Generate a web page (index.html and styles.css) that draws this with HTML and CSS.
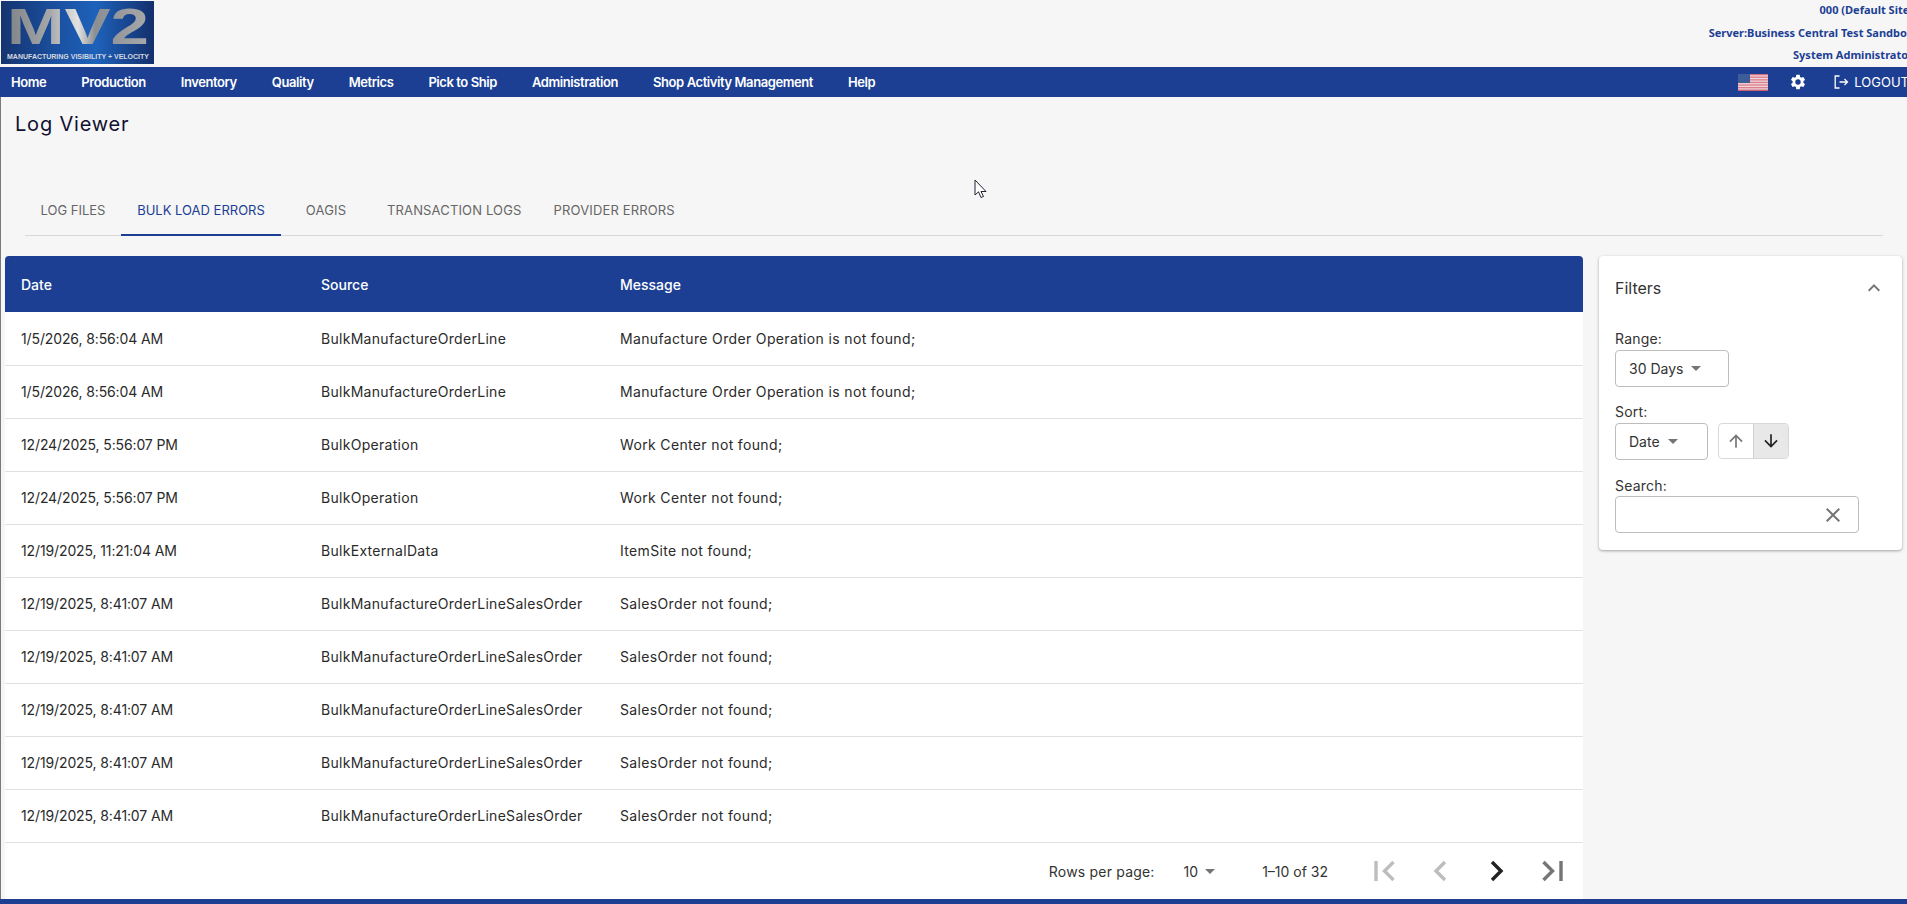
FILE: index.html
```html
<!DOCTYPE html>
<html lang="en">
<head>
<meta charset="utf-8">
<title>Log Viewer</title>
<link rel="stylesheet" href="styles.css">
</head>
<body>
<div class="app">
  <header class="top">
    <svg class="logo" width="153" height="63" viewBox="0 0 153 63" role="img" aria-label="MV2 logo">
      <defs>
        <linearGradient id="bg" x1="0" x2="1" y1="0" y2="0">
          <stop offset="0" stop-color="#15346f"/><stop offset="0.35" stop-color="#1a4f9f"/>
          <stop offset="0.62" stop-color="#1e62bb"/><stop offset="1" stop-color="#142f6c"/>
        </linearGradient>
        <linearGradient id="steel" x1="0" x2="1" y1="0" y2="0">
          <stop offset="0" stop-color="#7f8488"/><stop offset="0.3" stop-color="#a5a7a9"/>
          <stop offset="0.5" stop-color="#e2e2e2"/><stop offset="0.62" stop-color="#8b8e92"/>
          <stop offset="1" stop-color="#a6a8aa"/>
        </linearGradient>
      </defs>
      <rect width="153" height="63" fill="url(#bg)"/>
      <text class="logo-mark" x="6" y="43" textLength="142" lengthAdjust="spacingAndGlyphs" fill="url(#steel)">MV2</text>
      <text class="logo-tag" x="6" y="58" textLength="142" lengthAdjust="spacingAndGlyphs">MANUFACTURING VISIBILITY + VELOCITY</text>
    </svg>
    <div class="site-info">
      <div>000 (Default Site)</div>
      <div>Server:Business Central Test Sandbox</div>
      <div>System Administrator</div>
    </div>
  </header>

  <nav class="nav">
    <ul class="nav-links">
      <li>Home</li><li>Production</li><li>Inventory</li><li>Quality</li><li>Metrics</li>
      <li>Pick to Ship</li><li>Administration</li><li>Shop Activity Management</li><li>Help</li>
    </ul>
    <div class="nav-tools">
      <svg class="flag" width="30" height="17" viewBox="0 0 30 17" aria-label="US flag">
        <rect width="30" height="17" fill="#f1d3d8"/>
        <rect y="0" width="30" height="1.3" fill="#d9707f"/><rect y="2.6" width="30" height="1.3" fill="#d9808e"/>
        <rect y="5.2" width="30" height="1.3" fill="#d9808e"/><rect y="7.8" width="30" height="1.3" fill="#d9808e"/>
        <rect y="10.4" width="30" height="1.3" fill="#d9808e"/><rect y="13" width="30" height="1.3" fill="#d9808e"/>
        <rect y="15.6" width="30" height="1.4" fill="#c85f72"/>
        <rect width="12" height="9" fill="#3e5c98"/>
      </svg>
      <svg class="gear" width="18" height="18" viewBox="0 0 24 24" aria-label="Settings"><path fill="#fff" d="M19.14 12.94c.04-.3.06-.61.06-.94s-.02-.64-.07-.94l2.03-1.58a.49.49 0 0 0 .12-.61l-1.92-3.32a.49.49 0 0 0-.59-.22l-2.39.96a7 7 0 0 0-1.62-.94l-.36-2.54a.48.48 0 0 0-.48-.41h-3.84a.48.48 0 0 0-.47.41l-.36 2.54c-.59.24-1.13.57-1.62.94l-2.39-.96a.49.49 0 0 0-.59.22L2.74 8.87a.48.48 0 0 0 .12.61l2.03 1.58c-.05.3-.09.63-.09.94s.02.64.07.94l-2.03 1.58a.49.49 0 0 0-.12.61l1.92 3.32c.12.22.37.29.59.22l2.39-.96c.5.38 1.03.7 1.62.94l.36 2.54c.05.24.24.41.48.41h3.84c.24 0 .44-.17.47-.41l.36-2.54a7 7 0 0 0 1.62-.94l2.39.96c.22.08.47 0 .59-.22l1.92-3.32a.47.47 0 0 0-.12-.61zM12 15.6A3.6 3.6 0 1 1 12 8.4a3.6 3.6 0 0 1 0 7.2z"/></svg>
      <span class="logout">
        <svg width="16" height="16" viewBox="0 0 16 16" fill="none" stroke="#fff" stroke-width="1.3" aria-hidden="true"><path d="M6.500 2H2.200v12h4.300M6.500 8h8M11.500 5l3 3-3 3"/></svg>
        LOGOUT
      </span>
    </div>
  </nav>

  <main class="main">
    <h1 class="title">Log Viewer</h1>
    <div class="tabs">
      <div class="tab">LOG FILES</div>
      <div class="tab active">BULK LOAD ERRORS</div>
      <div class="tab">OAGIS</div>
      <div class="tab">TRANSACTION LOGS</div>
      <div class="tab">PROVIDER ERRORS</div>
    </div>

    <div class="content">
      <section class="card table-card">
        <table class="grid">
          <thead><tr><th class="c-date">Date</th><th class="c-source">Source</th><th>Message</th></tr></thead>
          <tbody>
            <tr><td>1/5/2026, 8:56:04 AM</td><td>BulkManufactureOrderLine</td><td>Manufacture Order Operation is not found;</td></tr>
            <tr><td>1/5/2026, 8:56:04 AM</td><td>BulkManufactureOrderLine</td><td>Manufacture Order Operation is not found;</td></tr>
            <tr><td>12/24/2025, 5:56:07 PM</td><td>BulkOperation</td><td>Work Center not found;</td></tr>
            <tr><td>12/24/2025, 5:56:07 PM</td><td>BulkOperation</td><td>Work Center not found;</td></tr>
            <tr><td>12/19/2025, 11:21:04 AM</td><td>BulkExternalData</td><td>ItemSite not found;</td></tr>
            <tr><td>12/19/2025, 8:41:07 AM</td><td>BulkManufactureOrderLineSalesOrder</td><td>SalesOrder not found;</td></tr>
            <tr><td>12/19/2025, 8:41:07 AM</td><td>BulkManufactureOrderLineSalesOrder</td><td>SalesOrder not found;</td></tr>
            <tr><td>12/19/2025, 8:41:07 AM</td><td>BulkManufactureOrderLineSalesOrder</td><td>SalesOrder not found;</td></tr>
            <tr><td>12/19/2025, 8:41:07 AM</td><td>BulkManufactureOrderLineSalesOrder</td><td>SalesOrder not found;</td></tr>
            <tr><td>12/19/2025, 8:41:07 AM</td><td>BulkManufactureOrderLineSalesOrder</td><td>SalesOrder not found;</td></tr>
          </tbody>
        </table>
        <div class="pager">
          <span class="pager-label">Rows per page:</span>
          <span class="pager-size">10<i class="caret"></i></span>
          <span class="pager-range">1–10 of 32</span>
          <span class="pager-btn"><svg width="24" height="22" viewBox="0 0 24 22" fill="none" stroke="#bdbdbd" stroke-width="3.4"><path d="M4 1v20M21.500 2 12.500 11l9 9"/></svg></span>
          <span class="pager-btn"><svg width="24" height="22" viewBox="0 0 24 22" fill="none" stroke="#bdbdbd" stroke-width="3.4"><path d="M17 2 8 11l9 9"/></svg></span>
          <span class="pager-btn"><svg width="24" height="22" viewBox="0 0 24 22" fill="none" stroke="#222" stroke-width="3.4"><path d="M8 2l9 9-9 9"/></svg></span>
          <span class="pager-btn"><svg width="24" height="22" viewBox="0 0 24 22" fill="none" stroke="#757575" stroke-width="3.4"><path d="M3.500 2l9 9-9 9M21 1v20"/></svg></span>
        </div>
      </section>

      <aside class="card filters">
        <div class="filters-head">
          <span>Filters</span>
          <svg width="24" height="24" viewBox="0 0 24 24" aria-hidden="true"><path fill="#757575" d="M7.400 15.400 12 10.800l4.600 4.600 1.400-1.400-6-6-6 6z"/></svg>
        </div>
        <label class="f-label">Range:</label>
        <div class="select range">30 Days<i class="caret"></i></div>
        <label class="f-label">Sort:</label>
        <div class="sort-row">
          <div class="select sort">Date<i class="caret"></i></div>
          <div class="toggle">
            <span class="t-btn"><svg width="20" height="20" viewBox="0 0 24 24" aria-hidden="true"><path fill="#757575" d="M4 12l1.410 1.410L11 7.830V20h2V7.830l5.580 5.590L20 12l-8-8z"/></svg></span>
            <span class="t-btn on"><svg width="20" height="20" viewBox="0 0 24 24" aria-hidden="true"><path fill="#222" d="M20 12l-1.410-1.410L13 16.170V4h-2v12.170l-5.580-5.590L4 12l8 8z"/></svg></span>
          </div>
        </div>
        <label class="f-label search-label">Search:</label>
        <div class="search">
          <svg width="24" height="24" viewBox="0 0 24 24" aria-hidden="true"><path fill="#757575" d="M19 6.410 17.590 5 12 10.590 6.410 5 5 6.410 10.590 12 5 17.590 6.410 19 12 13.410 17.590 19 19 17.590 13.410 12z"/></svg>
        </div>
      </aside>
    </div>

    <svg class="cursor" width="14" height="22" viewBox="0 0 14 22" aria-hidden="true"><path fill="#fff" stroke="#223" stroke-width="1" d="M1 1v15l3.500-3.200L7 18.500l2.500-1-2.500-5h5z"/></svg>
  </main>
  <div class="bottom-bar"></div>
</div>
</body>
</html>
```

FILE: styles.css
```css
* { box-sizing: border-box; }
html, body { margin: 0; height: 100%; overflow: hidden; }
body { background: #f6f6f6; font-family: Inter, "Noto Sans", sans-serif; color: #222; }
.app { display: flex; flex-direction: column; height: 904px; width: 1907px; overflow: hidden; }

.top { display: flex; justify-content: space-between; height: 67px; margin-right: -11px; flex: none; padding: 1px 0 0 1px; }
.logo { display: block; }
.logo-mark { font: 700 50px "Liberation Sans", sans-serif; }
.logo-tag { font: 700 7px "Liberation Sans", sans-serif; fill: #d5d8e0; }
.site-info { font: 700 11px/22.5px "Noto Sans", sans-serif; color: #1c3f94; text-align: right; margin-top: -2px; padding-right: 5px; }

.nav { display: flex; justify-content: space-between; align-items: center; height: 30px; flex: none; background: #1c3f94; color: #fff; margin-right: -11px; padding-left: 11px; }
.nav-links { display: flex; gap: 35px; list-style: none; margin: 0; padding: 0; font-size: 13px; font-weight: 600; letter-spacing: -0.42px; }
.nav-tools { display: flex; align-items: center; }
.flag { margin-right: 21px; }
.gear { margin-right: 26px; }
.logout { display: flex; align-items: center; gap: 5px; font-size: 13px; padding-right: 9px; }

.main { flex: 1; position: relative; min-height: 0; border-left: 1px solid #7a7a7a; overflow: hidden; }
.title { font-size: 20px; font-weight: 400; line-height: 30px; margin: 12px 0 0 14px; color: #101030; letter-spacing: 0.8px; }
.tabs { display: flex; height: 49px; margin: 48px 24px 0 24px; border-bottom: 1px solid #d8d8d8; font-size: 13px; color: #666; }
.tab { min-width: 90px; padding: 0 16px 4px; height: 49px; display: flex; align-items: center; justify-content: center; }
.tab:first-child { min-width: 0; width: 96px; padding-left: 14px; padding-right: 14px; white-space: nowrap; }
.tab:nth-child(n+3) { letter-spacing: 0.15px; }
.tab.active { width: 160px; white-space: nowrap; color: #1c3f94; border-bottom: 2px solid #1c3f94; padding-bottom: 2px; }

.content { display: flex; gap: 16px; align-items: flex-start; margin: 20px 5px 0 4px; }
.card { background: #fff; border-radius: 4px; }
.table-card { width: 1578px; flex: none; height: 700px; }
.grid { width: 100%; border-collapse: collapse; table-layout: fixed; font-size: 14px; }
.c-date { width: 300px; }
.c-source { width: 299px; }
.grid th { height: 56px; background: #1c3f94; color: #fff; text-align: left; font-weight: 500; padding: 0 0 0 16px; }
.grid thead tr th:first-child { border-top-left-radius: 4px; }
.grid thead tr th:last-child { border-top-right-radius: 4px; }
.grid td { height: 53px; padding: 0 0 0 16px; border-bottom: 1px solid #e0e0e0; color: #2a2a2a; white-space: nowrap; }
.grid td:nth-child(1) { letter-spacing: -0.12px; }
.grid td:nth-child(2) { letter-spacing: 0.29px; }
.grid td:nth-child(3) { letter-spacing: 0.35px; }

.pager { display: flex; align-items: center; justify-content: flex-end; height: 57px; font-size: 14px; padding-right: 3px; color: #333; }
.pager-label { letter-spacing: 0.2px; }
.pager-size { display: flex; align-items: center; gap: 7px; margin-left: 29px; }
.pager-range { margin: 0 28px 0 47px; }
.pager-btn { width: 56px; display: flex; justify-content: center; }
.caret { display: inline-block; width: 0; height: 0; border: 5px solid transparent; border-top-color: #757575; border-bottom: 0; }

.filters { width: 303px; flex: none; height: 294px; padding: 0 16px; box-shadow: 0 1px 3px rgba(0,0,0,.35); }
.filters-head { display: flex; justify-content: space-between; align-items: center; height: 64px; font-size: 16px; color: #333; }
.f-label { display: block; font-size: 14px; line-height: 20px; margin-top: 2px; margin-bottom: 1px; color: #333; letter-spacing: 0.2px; }
.filters-head + .f-label { margin-top: 9px; }
.search-label { position: relative; top: 1px; }
.select { display: inline-flex; align-items: center; height: 37px; border: 1px solid #bdbdbd; border-radius: 4px; padding: 0 13px; gap: 8px; font-size: 14px; color: #333; }
.range { width: 114px; margin-bottom: 15px; display: flex; }
.sort { width: 93px; }
.sort-row { display: flex; gap: 10px; align-items: flex-start; margin-bottom: 15px; }
.toggle { display: flex; width: 71px; height: 36px; border: 1px solid #d8d8d8; border-radius: 4px; overflow: hidden; }
.t-btn { flex: 1; display: flex; align-items: center; justify-content: center; }
.t-btn.on { background: #e8e8e8; border-left: 1px solid #d0d0d0; }
.search { width: 244px; height: 37px; border: 1px solid #bdbdbd; border-radius: 4px; display: flex; align-items: center; justify-content: flex-end; padding-right: 13px; }

.cursor { position: absolute; left: 973px; top: 82px; }
.bottom-bar { height: 5px; flex: none; background: #1c3f94; position: relative; }
```
